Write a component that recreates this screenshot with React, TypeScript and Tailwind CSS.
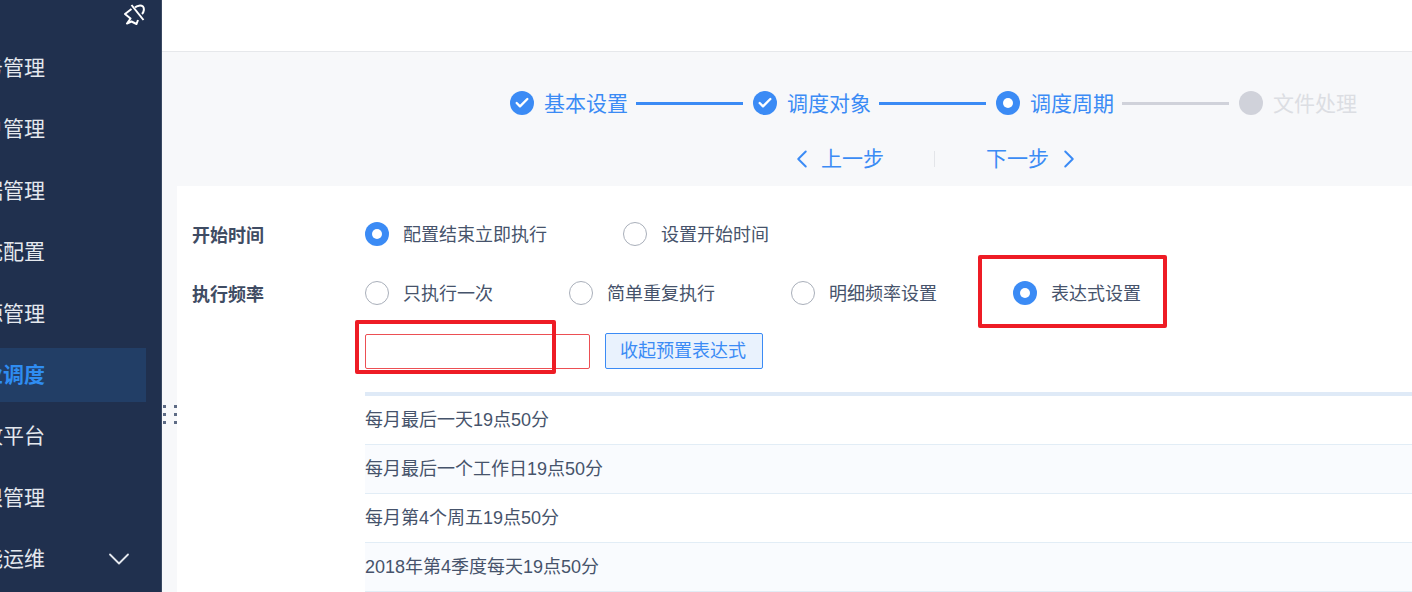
import { Check, ChevronDown, ChevronLeft, ChevronRight } from "lucide-react";

const font = { fontFamily: '"Liberation Sans", "Noto Sans CJK SC", sans-serif' };

const menu = ["任务管理", "用户管理", "数据管理", "系统配置", "资源管理", "作业调度", "开放平台", "权限管理", "智能运维"];

const steps = [
  { label: "基本设置", state: "done" },
  { label: "调度对象", state: "done" },
  { label: "调度周期", state: "current" },
  { label: "文件处理", state: "todo" },
];

const presets = ["每月最后一天19点50分", "每月最后一个工作日19点50分", "每月第4个周五19点50分", "2018年第4季度每天19点50分"];

function Radio({ label, checked, width }: { label: string; checked?: boolean; width: string }) {
  return (
    <label className={`flex items-center ${width}`}>
      {checked ? (
        <span className="w-6 h-6 rounded-full bg-[#3b8bf5] flex items-center justify-center">
          <span className="w-[10px] h-[10px] rounded-full bg-white" />
        </span>
      ) : (
        <span className="w-6 h-6 rounded-full border border-[#a9afba] bg-white" />
      )}
      <span className="ml-[14px] pt-[2px] text-[18px] text-[#46536b] leading-6">{label}</span>
    </label>
  );
}

function StepIcon({ state }: { state: string }) {
  if (state === "done") {
    return (
      <span className="w-6 h-6 rounded-full bg-[#3b8bf5] flex items-center justify-center">
        <Check className="w-4 h-4 text-white" strokeWidth={3.5} />
      </span>
    );
  }
  if (state === "current") {
    return (
      <span className="w-6 h-6 rounded-full bg-[#3b8bf5] flex items-center justify-center">
        <span className="w-[10px] h-[10px] rounded-full bg-white" />
      </span>
    );
  }
  return <span className="w-6 h-6 rounded-full bg-[#d0d2da]" />;
}

function PinIcon() {
  return (
    <svg width="21" height="21" viewBox="0 0 21 21" fill="none" stroke="white" strokeWidth="2" strokeLinejoin="round">
      <path d="M7.5 1 19.5 16" />
      <path d="M7.5 5 1 10 6.5 14.5 3 19.5 7.5 17.5 12.5 20 14 16" />
      <path d="M11 3.5C13 1.5 17 1 19 2.5 20.5 4.5 20 8 18 10" />
    </svg>
  );
}

export default function App() {
  return (
    <div className="w-[1412px] h-[592px] flex overflow-hidden bg-white" style={font}>
      {/* sidebar, scrolled sideways so the labels are cut off */}
      <aside className="w-[162px] shrink-0 h-full bg-[#20304e] border-r border-[#3a4963] overflow-hidden relative">
        <div className="h-[41px] flex justify-end pr-[16px] pt-[4px]">
          <PinIcon />
        </div>
        <nav>
          {menu.map((item, i) => (
            <div
              key={item}
              className={`h-[54px] w-[146px] mb-[7.4px] flex items-center ${i === 5 ? "bg-[#223e66]" : ""}`}
            >
              <span
                className={`ml-[-39px] text-[21px] leading-[54px] whitespace-nowrap ${i === 5 ? "font-bold text-[#2f8df2]" : "text-[#e4e8ee]"}`}
              >
                {item}
              </span>
              {i === 8 && <ChevronDown className="ml-[56px] w-9 h-9 text-[#e4e8ee]" strokeWidth={1.2} />}
            </div>
          ))}
        </nav>
      </aside>

      <div className="flex-1 min-w-0 flex flex-col">
        <header className="h-[52px] shrink-0 bg-white border-b border-[#e6e8eb]" />

        <main className="flex-1 min-h-0 bg-[#f7f8fa] relative">
          {/* drag handle */}
          <div className="absolute left-0 top-[353px] w-[15px] grid grid-cols-2 gap-y-[5px] gap-x-[8px] px-[1px]">
            {[0, 1, 2, 3, 4, 5].map((n) => (
              <span key={n} className="w-[3px] h-[3px] bg-[#5d6b85]" />
            ))}
          </div>

          {/* steps */}
          <div className="h-[104px] pl-[348px] pt-[39px] flex items-start">
            {steps.map((s, i) => (
              <div key={s.label} className="flex items-center h-6">
                <StepIcon state={s.state} />
                <span
                  className={`ml-[10px] pt-[1px] text-[21px] leading-6 whitespace-nowrap ${s.state === "todo" ? "text-[#dcdee3]" : "text-[#3b8bf5]"}`}
                >
                  {s.label}
                </span>
                {i < 3 && (
                  <span className={`ml-[8px] mr-[10px] w-[107px] h-[3px] ${i < 2 ? "bg-[#3b8bf5]" : "bg-[#d0d2da]"}`} />
                )}
              </div>
            ))}
          </div>

          <div className="h-[30px] absolute top-[92px] left-[625px] flex items-center text-[#3b8bf5]">
            <ChevronLeft className="w-[30px] h-[30px]" strokeWidth={1.6} />
            <span className="ml-[4px] text-[21px] leading-6">上一步</span>
            <span className="ml-[50px] mr-[51px] w-px h-[16px] bg-[#e3e5e9]" />
            <span className="text-[21px] leading-6">下一步</span>
            <ChevronRight className="ml-[5px] w-[30px] h-[30px]" strokeWidth={1.6} />
          </div>

          {/* form card */}
          <section className="absolute left-[15px] right-0 top-[134px] bottom-0 bg-white pl-[15px] overflow-hidden">
            <div className="flex items-center h-6 mt-[36px]">
              <span className="w-[173px] pt-[3px] text-[18px] font-bold text-[#3f4c63] leading-6">开始时间</span>
              <Radio label="配置结束立即执行" checked width="w-[258px]" />
              <Radio label="设置开始时间" width="w-[200px]" />
            </div>
            <div className="flex items-center h-6 mt-[35px]">
              <span className="w-[173px] pt-[3px] text-[18px] font-bold text-[#3f4c63] leading-6">执行频率</span>
              <Radio label="只执行一次" width="w-[204px]" />
              <Radio label="简单重复执行" width="w-[222px]" />
              <Radio label="明细频率设置" width="w-[222px]" />
              <Radio label="表达式设置" checked width="w-[200px]" />
            </div>
            <div className="flex items-center ml-[173px] mt-[28px]">
              <input className="w-[225px] h-[35px] rounded-[2px] border border-[#ec4f54] bg-white outline-none" />
              <button className="ml-[15px] w-[158px] h-9 pr-[2px] rounded-[2px] border border-[#3b8bf5] bg-[#e9f2fd] text-[#3b8bf5] text-[18px] leading-6">
                收起预置表达式
              </button>
            </div>
            <div className="ml-[173px] mt-[23px] border-t-4 border-[#dfeaf7]">
              {presets.map((p, i) => (
                <div
                  key={p}
                  className={`h-[49px] pt-[1px] border-b border-[#e2edf6] flex items-center text-[18px] text-[#46536b] ${i % 2 === 1 ? "bg-[#f9fbfe]" : "bg-white"}`}
                >
                  {p}
                </div>
              ))}
            </div>
          </section>
        </main>
      </div>

      {/* red annotation boxes on top of the screenshot */}
      <div className="absolute left-[355px] top-[320px] w-[201px] h-[54px] rounded-[2px] border-4 border-[#ee1c25] pointer-events-none" />
      <div className="absolute left-[978px] top-[255px] w-[189px] h-[73px] rounded-[2px] border-4 border-[#ee1c25] pointer-events-none" />
    </div>
  );
}
